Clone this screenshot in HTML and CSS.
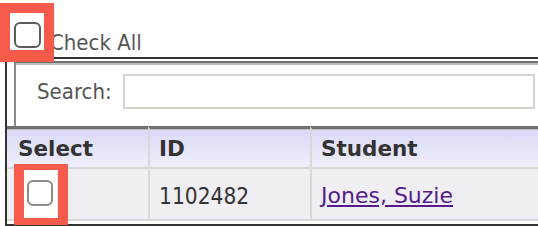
FILE: index.html
```html
<!DOCTYPE html>
<html lang="en">
<head>
    <meta charset="UTF-8">
    <meta name="viewport" content="width=device-width, initial-scale=1.0">
    <title>Students</title>
    <link rel="stylesheet" href="styles.css">
</head>
<body>
    <div class="checkall">
        <span class="hl hl-top"><input type="checkbox" class="cb cb-dark"></span>
        <span class="checkall-label">Check All</span>
    </div>
    <div class="frame">
        <div class="search">
            <label class="search-label" for="q">Search:</label>
            <input type="text" id="q" class="search-input">
        </div>
        <table class="grid">
            <thead>
                <tr>
                    <th class="col-select">Select</th>
                    <th class="col-id">ID</th>
                    <th class="col-name">Student</th>
                </tr>
            </thead>
            <tbody>
                <tr>
                    <td class="col-select"><span class="hl hl-row"><input type="checkbox" class="cb"></span></td>
                    <td class="col-id">1102482</td>
                    <td class="col-name"><a href="#">Jones, Suzie</a></td>
                </tr>
            </tbody>
        </table>
    </div>
</body>
</html>
```

FILE: styles.css
```css
* {margin: 0; padding: 0; box-sizing: border-box;}
html, body {
    overflow: hidden;
}
body {
    background: #fff;
    color: #444;
    font-family: "DejaVu Sans Condensed", "DejaVu Sans", sans-serif;
    font-stretch: condensed;
    font-size: 22px;
    line-height: 26px;
}

/* check all */
.checkall {
    display: flex;
    align-items: flex-start;
    height: 57px;
    padding-left: 14px;
}
.checkall .hl {
    margin-top: 22px;
}
.checkall-label {
    margin-top: 30px;
    margin-left: 9px;
    color: #555;
}

/* checkbox */
.cb {
    -webkit-appearance: none;
    appearance: none;
    display: block;
    width: 26px;
    height: 26px;
    border: 2px solid #8c8c8c;
    border-radius: 6px;
    background: #fff;
    position: relative;
    z-index: 1;
}
.cb-dark {
    width: 27px;
    border: 2.5px solid #5c5c5c;
}

/* red highlight boxes */
.hl {
    position: relative;
    display: inline-block;
    vertical-align: top;
}
.hl::before {
    content: "";
    position: absolute;
    z-index: 0;
    background: #fff;
    border: 10px solid #f65a4b;
}
.hl-top::before {
    left: -14px;
    top: -19px;
    right: -13px;
    bottom: -14px;
    border-bottom-width: 12px;
}
.hl-row::before {
    left: -13px;
    top: -16px;
    right: -15px;
    bottom: -19px;
    border-top-width: 6px;
    border-bottom-width: 7px;
}

/* frame */
.frame {
    margin-left: 5px;
    margin-right: -40px;
    border: 2px solid #333;
    padding-top: 2px;
    padding-bottom: 3px;
}
.search {
    display: flex;
    align-items: center;
    margin-left: 7px;
    border-top: 2px solid #6f6f6f;
    border-left: 2px solid #8a8a8a;
    box-shadow: inset 0 2px 0 #bdbdbd;
    padding: 11px 0 17px 21px;
}
.search-label {
    color: #555;
}
.search-input {
    margin-left: 11px;
    width: 412px;
    height: 35px;
    border: 2px solid #d4d4cc;
    background: #fff;
    outline: none;
}

/* table */
.grid {
    width: 100%;
    border-collapse: separate;
    border-spacing: 0;
}
.grid th {
    text-align: left;
    font-family: "DejaVu Sans", sans-serif;
    font-stretch: normal;
    font-weight: bold;
    font-size: 21.5px;
    color: #333;
    padding: 7px 0 5px 9px;
    background: linear-gradient(#dadaf8, #eeeefa);
    border-top: 3px solid #707070;
    box-shadow: inset 0 1px 0 #bdbdbd;
    border-bottom: 2px solid #d8d8d8;
}
.grid td {
    background: #efeff3;
    color: #333;
    padding: 14px 0 10px 9px;
    border-bottom: 2px solid #d9d9d9;
    vertical-align: top;
}
.grid .col-select {
    width: 141px;
    padding-left: 11px;
}
.grid td.col-select {
    padding: 11px 0 13px 20px;
}
.grid .col-id {
    width: 162px;
    border-left: 2px solid #d8d8d8;
}
.grid td.col-id {
    font-size: 22.5px;
}
.grid .col-name {
    border-left: 2px solid #d8d8d8;
}
.grid a {
    font-family: "DejaVu Sans", sans-serif;
    font-stretch: normal;
    color: #551a8b;
}
```
